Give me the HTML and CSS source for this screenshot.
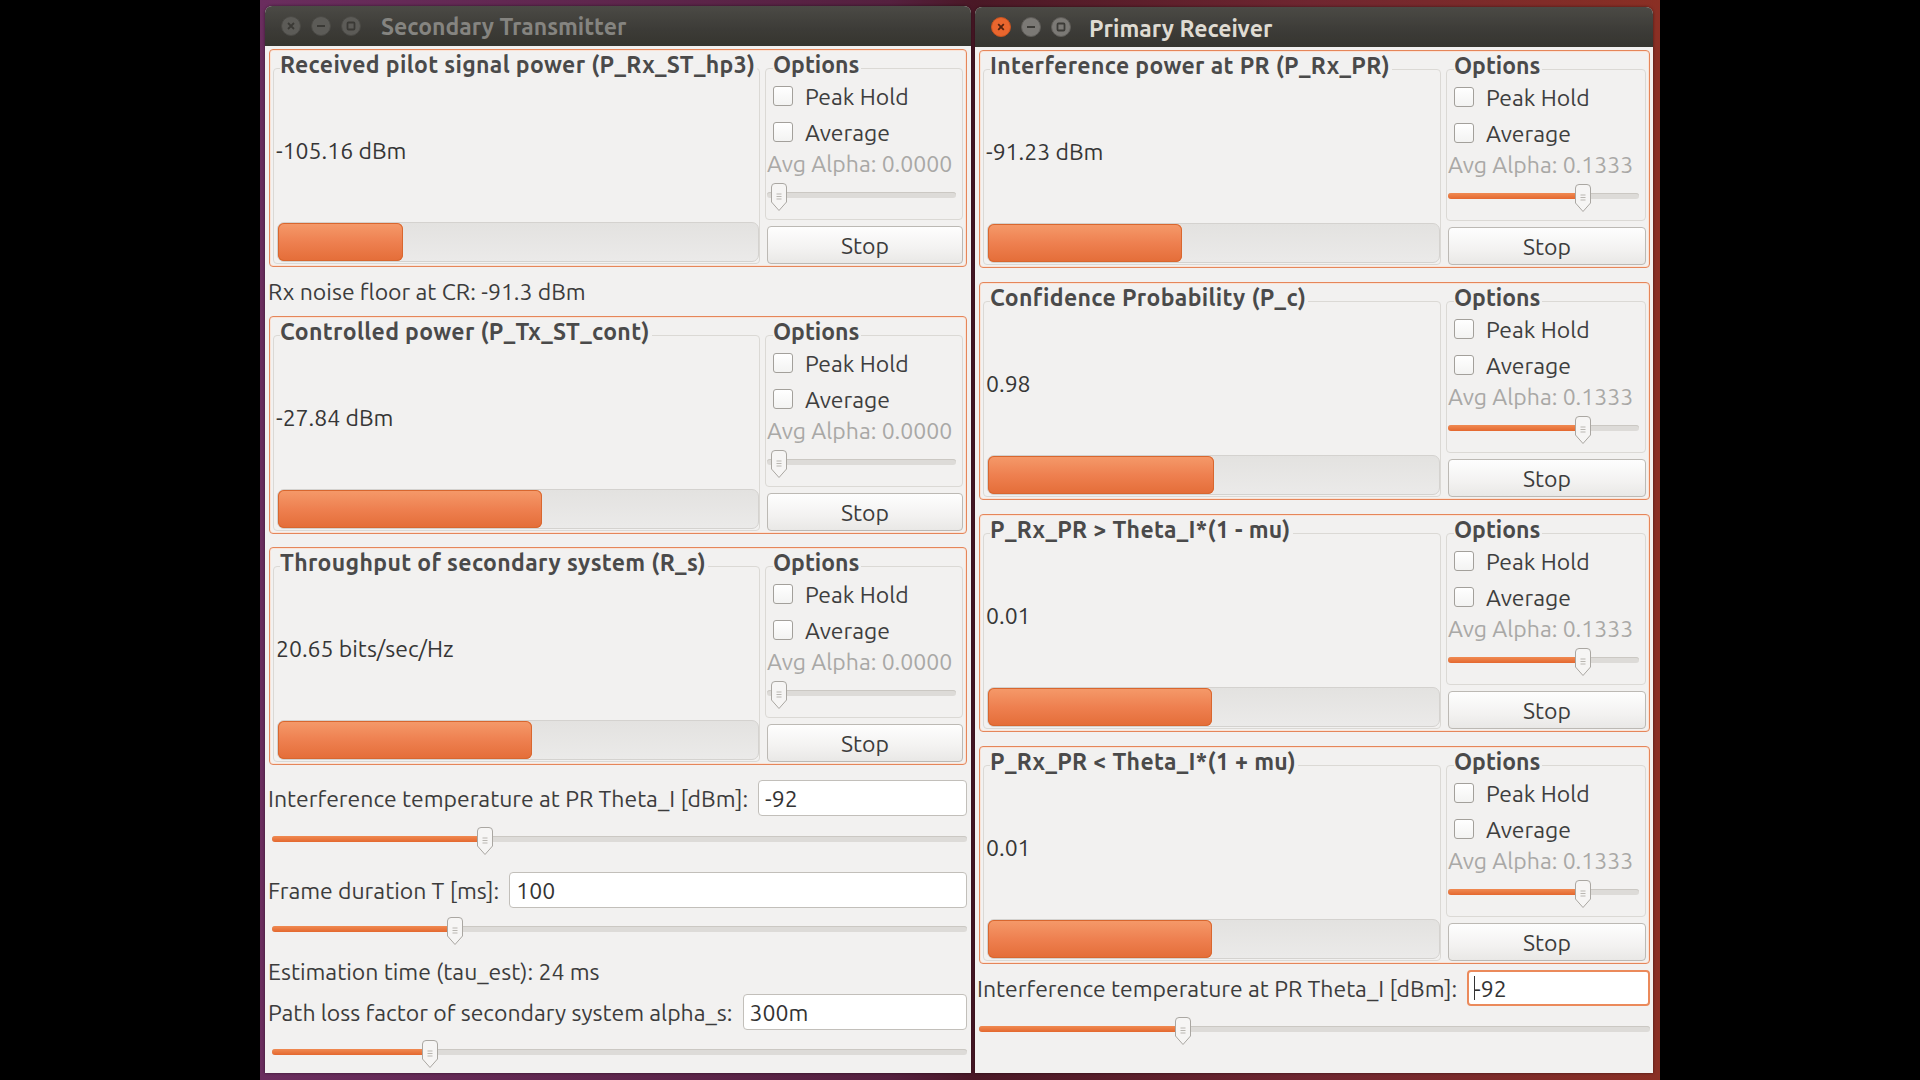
FILE: index.html
```html
<!DOCTYPE html>
<html>
<head>
<meta charset="utf-8">
<link rel="stylesheet" href="styles.css">
</head>
<body>
<div class="screen">
  <div class="desktop">

    <!-- Secondary Transmitter -->
    <div class="window win-left">
      <div class="titlebar inactive">
        <div class="wbtns">
          <svg class="wbtn" viewBox="0 0 20 20"><circle cx="10" cy="10" r="9.5" class="c-off"/><path d="M7 7L13 13M13 7L7 13" class="s-off"/></svg>
          <svg class="wbtn" viewBox="0 0 20 20"><circle cx="10" cy="10" r="9.5" class="c-off"/><path d="M6 10H14" class="s-off" stroke-width="2.2"/></svg>
          <svg class="wbtn" viewBox="0 0 20 20"><circle cx="10" cy="10" r="9.5" class="c-off"/><rect x="6.5" y="6.5" width="7" height="7" rx="1" class="s-off" fill="none"/></svg>
        </div>
        <div class="wtitle">Secondary Transmitter</div>
      </div>
      <div class="content">
        <div class="panel">
          <div class="meter">
            <div class="frame-title">Received pilot signal power (P_Rx_ST_hp3)</div>
            <div class="meter-value">-105.16 dBm</div>
            <div class="trough"><div class="fill" style="width:26%"></div></div>
          </div>
          <div class="opt-col">
            <div class="options">
              <div class="frame-title">Options</div>
              <div class="check"><span class="box"></span>Peak Hold</div>
              <div class="check"><span class="box"></span>Average</div>
              <div class="alpha">Avg Alpha: 0.0000</div>
              <div class="slider small"><div class="track"><div class="track-fill" style="width:0%"></div></div><svg class="thumb" style="left:6.5%" viewBox="0 0 18 30" width="18" height="30"><path d="M1.5 5Q1.5 1.5 5 1.5H13Q16.5 1.5 16.5 5V20L9 28.5L1.5 20Z" fill="#f6f5f4" stroke="#aaa7a2"/><path d="M6.5 12H11.5M6.5 14.5H11.5M6.5 17H11.5" stroke="#b9b6b1"/></svg></div>
            </div>
            <div class="stop">Stop</div>
          </div>
        </div>

        <div class="text-line noise">Rx noise floor at CR: -91.3 dBm</div>

        <div class="panel">
          <div class="meter">
            <div class="frame-title">Controlled power (P_Tx_ST_cont)</div>
            <div class="meter-value">-27.84 dBm</div>
            <div class="trough"><div class="fill" style="width:55%"></div></div>
          </div>
          <div class="opt-col">
            <div class="options">
              <div class="frame-title">Options</div>
              <div class="check"><span class="box"></span>Peak Hold</div>
              <div class="check"><span class="box"></span>Average</div>
              <div class="alpha">Avg Alpha: 0.0000</div>
              <div class="slider small"><div class="track"><div class="track-fill" style="width:0%"></div></div><svg class="thumb" style="left:6.5%" viewBox="0 0 18 30" width="18" height="30"><path d="M1.5 5Q1.5 1.5 5 1.5H13Q16.5 1.5 16.5 5V20L9 28.5L1.5 20Z" fill="#f6f5f4" stroke="#aaa7a2"/><path d="M6.5 12H11.5M6.5 14.5H11.5M6.5 17H11.5" stroke="#b9b6b1"/></svg></div>
            </div>
            <div class="stop">Stop</div>
          </div>
        </div>

        <div class="panel gap13">
          <div class="meter">
            <div class="frame-title">Throughput of secondary system (R_s)</div>
            <div class="meter-value">20.65 bits/sec/Hz</div>
            <div class="trough"><div class="fill" style="width:53%"></div></div>
          </div>
          <div class="opt-col">
            <div class="options">
              <div class="frame-title">Options</div>
              <div class="check"><span class="box"></span>Peak Hold</div>
              <div class="check"><span class="box"></span>Average</div>
              <div class="alpha">Avg Alpha: 0.0000</div>
              <div class="slider small"><div class="track"><div class="track-fill" style="width:0%"></div></div><svg class="thumb" style="left:6.5%" viewBox="0 0 18 30" width="18" height="30"><path d="M1.5 5Q1.5 1.5 5 1.5H13Q16.5 1.5 16.5 5V20L9 28.5L1.5 20Z" fill="#f6f5f4" stroke="#aaa7a2"/><path d="M6.5 12H11.5M6.5 14.5H11.5M6.5 17H11.5" stroke="#b9b6b1"/></svg></div>
            </div>
            <div class="stop">Stop</div>
          </div>
        </div>

        <div class="field first"><span class="flabel">Interference temperature at PR Theta_I [dBm]:</span><div class="input">-92</div></div>
        <div class="slider big"><div class="track"><div class="track-fill" style="width:31%"></div></div><svg class="thumb" style="left:31%" viewBox="0 0 18 30" width="18" height="30"><path d="M1.5 5Q1.5 1.5 5 1.5H13Q16.5 1.5 16.5 5V20L9 28.5L1.5 20Z" fill="#f6f5f4" stroke="#aaa7a2"/><path d="M6.5 12H11.5M6.5 14.5H11.5M6.5 17H11.5" stroke="#b9b6b1"/></svg></div>

        <div class="field second"><span class="flabel">Frame duration T [ms]:</span><div class="input">100</div></div>
        <div class="slider mid"><div class="track"><div class="track-fill" style="width:26.8%"></div></div><svg class="thumb" style="left:26.8%" viewBox="0 0 18 30" width="18" height="30"><path d="M1.5 5Q1.5 1.5 5 1.5H13Q16.5 1.5 16.5 5V20L9 28.5L1.5 20Z" fill="#f6f5f4" stroke="#aaa7a2"/><path d="M6.5 12H11.5M6.5 14.5H11.5M6.5 17H11.5" stroke="#b9b6b1"/></svg></div>

        <div class="text-line est">Estimation time (tau_est): 24 ms</div>

        <div class="field third"><span class="flabel">Path loss factor of secondary system alpha_s:</span><div class="input">300m</div></div>
        <div class="slider last"><div class="track"><div class="track-fill" style="width:23.2%"></div></div><svg class="thumb" style="left:23.2%" viewBox="0 0 18 30" width="18" height="30"><path d="M1.5 5Q1.5 1.5 5 1.5H13Q16.5 1.5 16.5 5V20L9 28.5L1.5 20Z" fill="#f6f5f4" stroke="#aaa7a2"/><path d="M6.5 12H11.5M6.5 14.5H11.5M6.5 17H11.5" stroke="#b9b6b1"/></svg></div>
      </div>
    </div>

    <!-- Primary Receiver -->
    <div class="window win-right">
      <div class="titlebar active">
        <div class="wbtns">
          <svg class="wbtn" viewBox="0 0 20 20"><circle cx="10" cy="10" r="9.5" class="c-close"/><path d="M7.2 7.2L12.8 12.8M12.8 7.2L7.2 12.8" class="s-close"/></svg>
          <svg class="wbtn" viewBox="0 0 20 20"><circle cx="10" cy="10" r="9.5" class="c-on"/><path d="M6 10H14" class="s-on" stroke-width="2.2"/></svg>
          <svg class="wbtn" viewBox="0 0 20 20"><circle cx="10" cy="10" r="9.5" class="c-on"/><rect x="6.5" y="6.5" width="7" height="7" rx="1" class="s-on" fill="none"/></svg>
        </div>
        <div class="wtitle">Primary Receiver</div>
      </div>
      <div class="content">
        <div class="panel">
          <div class="meter">
            <div class="frame-title">Interference power at PR (P_Rx_PR)</div>
            <div class="meter-value">-91.23 dBm</div>
            <div class="trough"><div class="fill" style="width:43%"></div></div>
          </div>
          <div class="opt-col">
            <div class="options">
              <div class="frame-title">Options</div>
              <div class="check"><span class="box"></span>Peak Hold</div>
              <div class="check"><span class="box"></span>Average</div>
              <div class="alpha">Avg Alpha: 0.1333</div>
              <div class="slider small"><div class="track"><div class="track-fill" style="width:69.5%"></div></div><svg class="thumb" style="left:69.5%" viewBox="0 0 18 30" width="18" height="30"><path d="M1.5 5Q1.5 1.5 5 1.5H13Q16.5 1.5 16.5 5V20L9 28.5L1.5 20Z" fill="#f6f5f4" stroke="#aaa7a2"/><path d="M6.5 12H11.5M6.5 14.5H11.5M6.5 17H11.5" stroke="#b9b6b1"/></svg></div>
            </div>
            <div class="stop">Stop</div>
          </div>
        </div>

        <div class="panel gap14">
          <div class="meter">
            <div class="frame-title">Confidence Probability (P_c)</div>
            <div class="meter-value">0.98</div>
            <div class="trough"><div class="fill" style="width:50%"></div></div>
          </div>
          <div class="opt-col">
            <div class="options">
              <div class="frame-title">Options</div>
              <div class="check"><span class="box"></span>Peak Hold</div>
              <div class="check"><span class="box"></span>Average</div>
              <div class="alpha">Avg Alpha: 0.1333</div>
              <div class="slider small"><div class="track"><div class="track-fill" style="width:69.5%"></div></div><svg class="thumb" style="left:69.5%" viewBox="0 0 18 30" width="18" height="30"><path d="M1.5 5Q1.5 1.5 5 1.5H13Q16.5 1.5 16.5 5V20L9 28.5L1.5 20Z" fill="#f6f5f4" stroke="#aaa7a2"/><path d="M6.5 12H11.5M6.5 14.5H11.5M6.5 17H11.5" stroke="#b9b6b1"/></svg></div>
            </div>
            <div class="stop">Stop</div>
          </div>
        </div>

        <div class="panel gap14">
          <div class="meter">
            <div class="frame-title">P_Rx_PR &gt; Theta_I*(1 - mu)</div>
            <div class="meter-value">0.01</div>
            <div class="trough"><div class="fill" style="width:49.7%"></div></div>
          </div>
          <div class="opt-col">
            <div class="options">
              <div class="frame-title">Options</div>
              <div class="check"><span class="box"></span>Peak Hold</div>
              <div class="check"><span class="box"></span>Average</div>
              <div class="alpha">Avg Alpha: 0.1333</div>
              <div class="slider small"><div class="track"><div class="track-fill" style="width:69.5%"></div></div><svg class="thumb" style="left:69.5%" viewBox="0 0 18 30" width="18" height="30"><path d="M1.5 5Q1.5 1.5 5 1.5H13Q16.5 1.5 16.5 5V20L9 28.5L1.5 20Z" fill="#f6f5f4" stroke="#aaa7a2"/><path d="M6.5 12H11.5M6.5 14.5H11.5M6.5 17H11.5" stroke="#b9b6b1"/></svg></div>
            </div>
            <div class="stop">Stop</div>
          </div>
        </div>

        <div class="panel gap14">
          <div class="meter">
            <div class="frame-title">P_Rx_PR &lt; Theta_I*(1 + mu)</div>
            <div class="meter-value">0.01</div>
            <div class="trough"><div class="fill" style="width:49.7%"></div></div>
          </div>
          <div class="opt-col">
            <div class="options">
              <div class="frame-title">Options</div>
              <div class="check"><span class="box"></span>Peak Hold</div>
              <div class="check"><span class="box"></span>Average</div>
              <div class="alpha">Avg Alpha: 0.1333</div>
              <div class="slider small"><div class="track"><div class="track-fill" style="width:69.5%"></div></div><svg class="thumb" style="left:69.5%" viewBox="0 0 18 30" width="18" height="30"><path d="M1.5 5Q1.5 1.5 5 1.5H13Q16.5 1.5 16.5 5V20L9 28.5L1.5 20Z" fill="#f6f5f4" stroke="#aaa7a2"/><path d="M6.5 12H11.5M6.5 14.5H11.5M6.5 17H11.5" stroke="#b9b6b1"/></svg></div>
            </div>
            <div class="stop">Stop</div>
          </div>
        </div>

        <div class="field rfield"><span class="flabel">Interference temperature at PR Theta_I [dBm]:</span><div class="input focused"><span class="caret"></span>-92</div></div>
        <div class="slider big"><div class="track"><div class="track-fill" style="width:30.6%"></div></div><svg class="thumb" style="left:30.6%" viewBox="0 0 18 30" width="18" height="30"><path d="M1.5 5Q1.5 1.5 5 1.5H13Q16.5 1.5 16.5 5V20L9 28.5L1.5 20Z" fill="#f6f5f4" stroke="#aaa7a2"/><path d="M6.5 12H11.5M6.5 14.5H11.5M6.5 17H11.5" stroke="#b9b6b1"/></svg></div>
      </div>
    </div>

  </div>
</div>
</body>
</html>
```
FILE: styles.css
```css
* { box-sizing: border-box; }
html, body { margin: 0; padding: 0; background: #000; }
body {
  width: 1920px; height: 1080px; overflow: hidden;
  font-family: "Ubuntu", "Open Sans", "DejaVu Sans", sans-serif;
  font-size: 23px; color: #3c3c3c;
}
.screen { display: flex; justify-content: center; width: 1920px; height: 1080px; background: #000; }
.desktop {
  position: relative; width: 1400px; height: 1080px;
  background: linear-gradient(90deg, #6a2d5e 0%, #55203f 45%, #4a1826 51%, #6f2630 75%, #8a2f24 100%);
}
.window {
  position: absolute; display: flex; flex-direction: column;
  background: #f2f1f0; border-radius: 7px 7px 0 0; overflow: hidden;
  box-shadow: 0 0 3px rgba(0,0,0,0.5);
}
.win-left { left: 5px; top: 6px; width: 706px; height: 1067px; }
.win-right { left: 715px; top: 7px; width: 678px; height: 1066px; }

.titlebar {
  height: 40px; flex: none; display: flex; align-items: center;
  background: linear-gradient(#4b4a45, #3c3b37 60%, #36352f);
  padding-left: 16px;
}
.wbtns { display: flex; gap: 10px; }
.wbtn { width: 20px; height: 20px; }
.c-off { fill: #5c5b57; stroke: #4a4945; }
.s-off { stroke: #3a3935; stroke-width: 1.8; }
.c-close { fill: #e9662e; stroke: #c9531f; }
.s-close { stroke: #52220f; stroke-width: 1.8; }
.c-on { fill: #7b7975; stroke: #5f5d59; }
.s-on { stroke: #3c3b37; stroke-width: 1.8; }
.wtitle { font-weight: bold; font-size: 23px; margin-left: 20px; }
.inactive .wtitle { color: #858480; }
.active .wtitle { color: #dfdbd2; margin-left: 18px; padding-top: 2px; }

.content { flex: 1; display: flex; flex-direction: column; padding: 3px 4px 0 3px; }
.win-right .content { padding: 3px 3px 0 2px; }

.panel {
  height: 218px; flex: none;
  border: 1px solid #e5865a; border-radius: 4px;
  box-shadow: inset 0 0 0 1px #fae3d6;
  display: grid; grid-template-columns: 1fr 198px; column-gap: 5px;
  padding: 2px 3px 2px 3px; margin-left: 1px;
}
.win-right .panel { margin-left: 2px; grid-template-columns: 1fr 200px; }
.panel.gap13 { margin-top: 13px; }
.panel.gap14 { margin-top: 14px; }

.meter {
  margin-top: 16px; border: 1px solid #dbd9d5; border-radius: 4px;
  display: flex; flex-direction: column; min-width: 0;
}
.frame-title {
  margin-top: -17px; margin-left: 6px; align-self: flex-start;
  line-height: 26px; font-weight: bold; color: #4a4a4a;
  background: #f2f1f0; padding-right: 2px; white-space: nowrap;
}
.meter > .frame-title { letter-spacing: 0.35px; }
.meter-value { flex: 1; display: flex; align-items: center; padding-left: 2px; color: #363636; }
.trough {
  height: 40px; margin: 0 0 1px 3px;
  background: linear-gradient(#e3e2e0, #ebeae9);
  border: 1px solid #d4d2cf; border-radius: 7px;
}
.fill {
  height: 100%; border-radius: 6px;
  background: linear-gradient(#f59a6a, #ee8050 50%, #e46d38);
  box-shadow: inset 0 0 0 1px #d8672f;
}

.opt-col { display: flex; flex-direction: column; gap: 6px; }
.options {
  flex: 1; margin-top: 16px; border: 1px solid #dbd9d5; border-radius: 4px;
  display: flex; flex-direction: column; padding: 0 3px 4px 1px;
}
.options .frame-title { margin-left: 6px; }
.check { height: 36px; display: flex; align-items: center; padding-left: 6px; color: #3e3e3e; }
.box {
  width: 20px; height: 20px; margin-right: 12px;
  border: 1px solid #a3a09b; border-radius: 3px;
  background: linear-gradient(#ffffff, #f3f3f2);
}
.alpha { height: 28px; line-height: 28px; color: #a9a8a6; white-space: nowrap; }
.stop {
  height: 38px; flex: none; display: flex; align-items: center; justify-content: center;
  border: 1px solid #bcb9b4; border-radius: 4px;
  background: linear-gradient(#fefefe, #f3f2f1 60%, #e9e8e6);
  color: #3c3c3c; margin-left: 2px;
}

.slider { position: relative; display: flex; align-items: center; flex: none; }
.slider.small { height: 34px; padding: 0 3px 0 0; }
.slider.big { height: 46px; padding-left: 4px; }
.slider.mid { height: 42px; padding-left: 4px; }
.slider.last { height: 44px; padding-left: 4px; }
.track {
  flex: 1; height: 6px; border-radius: 3px;
  background: #dddbd8; box-shadow: inset 0 1px 0 #cbc8c3;
  position: relative;
}
.track-fill { height: 100%; border-radius: 3px; background: linear-gradient(#f08a52, #e4682f); }
.thumb { position: absolute; top: 50%; margin-top: -13px; margin-left: -9px; }

.text-line { flex: none; }
.noise { height: 49px; display: flex; align-items: center; }
.est { height: 42px; display: flex; align-items: center; }

.field { display: flex; align-items: center; height: 36px; flex: none; }
.field.first { margin-top: 15px; }
.field.second { margin-top: 10px; }
.field.third { margin-top: 2px; }
.field.rfield { margin-top: 6px; }
.flabel { white-space: nowrap; margin-right: 10px; }
.input {
  flex: 1; height: 36px; display: flex; align-items: center;
  background: #fff; border: 1px solid #c2bfba; border-radius: 4px;
  padding-left: 6px; color: #333;
}
.input.focused { border: 2px solid #eb8a5b; padding-left: 5px; }
.caret { display: inline-block; width: 1px; height: 24px; background: #333; margin-right: -1px; }
.win-right .slider.big { padding-left: 2px; }
```
